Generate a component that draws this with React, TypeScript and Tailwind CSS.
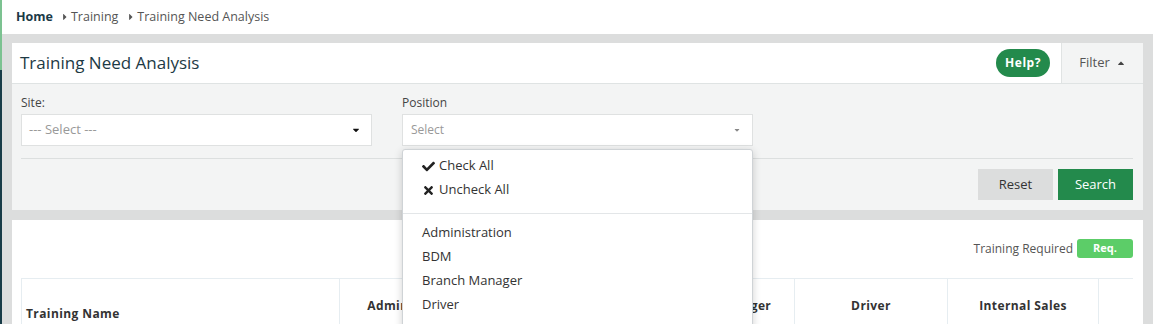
import React from 'react';
import { FaCaretRight, FaCaretUp, FaCaretDown, FaCheck, FaTimes } from 'react-icons/fa';

const positions = ['Administration', 'BDM', 'Branch Manager', 'Driver'];

const columns = [
  { name: 'Administration', w: 'w-[152px]' },
  { name: 'BDM', w: 'w-[152px]' },
  { name: 'Branch Manager', w: 'w-[151px]' },
  { name: 'Driver', w: 'w-[153px]' },
  { name: 'Internal Sales', w: 'w-[151px]' },
];

function PositionDropdown() {
  return (
    <div className="absolute left-0 top-[calc(100%+3px)] w-[351px] h-[200px] bg-white border border-[#cfd3d6] rounded-[3px] shadow-[0_2px_8px_rgba(0,0,0,0.18)] z-10 pt-[4px] text-[13px] text-[#333]">
      <div className="h-[24px] flex items-center pl-[19px] gap-[4px]">
        <FaCheck className="text-[13px] text-[#222]" />
        <span>Check All</span>
      </div>
      <div className="h-[24px] flex items-center pl-[19px] gap-[4px]">
        <FaTimes className="text-[13px] text-[#222]" />
        <span>Uncheck All</span>
      </div>
      <div className="h-px bg-[#e3e6e8] mt-[11px] mb-[7px]" />
      {positions.map((p) => (
        <div key={p} className="h-[24px] flex items-center pl-[19px]">
          {p}
        </div>
      ))}
    </div>
  );
}

export default function App() {
  return (
    <div className="w-[1153px] h-[324px] overflow-hidden flex font-['Open_Sans',sans-serif]">
      <div className="w-[2px] flex flex-col shrink-0">
        <div className="h-[70px] shrink-0 bg-[#7cc291]" />
        <div className="flex-1 bg-[#173b47]" />
      </div>

      <div className="flex-1 bg-[#dcdddd] flex flex-col">
        <div className="h-[34px] shrink-0 bg-white flex items-center pl-[14px] text-[12.5px] text-[#555]">
          <span className="font-bold text-[#1b3a47]">Home</span>
          <FaCaretRight className="ml-[7px] mr-[1px] text-[10px] text-[#555]" />
          <span>Training</span>
          <FaCaretRight className="ml-[8px] mr-[1px] text-[10px] text-[#555]" />
          <span>Training Need Analysis</span>
        </div>

        <div className="shrink-0 pt-[9px] pl-[10px] pr-[10px] flex flex-col gap-[10px]">
          <div className="shrink-0 bg-white">
            <div className="h-[41px] border-b border-[#dfe3e3] flex items-stretch">
              <div className="flex-1 flex items-center pl-[8px] text-[17px] text-[#1d3a45]">
                Training Need Analysis
              </div>
              <div className="flex items-center pr-[11px]">
                <button className="h-[28px] w-[54px] rounded-full bg-[#238a4c] text-white text-[12px] font-bold tracking-[0.5px]">
                  Help?
                </button>
              </div>
              <div className="w-[82px] bg-[#f3f4f4] border-l border-[#e0e3e3] flex items-center justify-center gap-[6px] text-[13px] text-[#555]">
                <span>Filter</span>
                <FaCaretUp className="text-[10px] text-[#444]" />
              </div>
            </div>

            <div className="bg-[#f3f4f4] pl-[9px] pr-[10px] pt-[11px] pb-[10px]">
              <div className="flex gap-[30px]">
                <div className="w-[351px]">
                  <div className="text-[12px] text-[#444] leading-[16px] mb-[3px]">Site:</div>
                  <div className="h-[32px] bg-white border border-[#dfe1e1] flex items-center justify-between pl-[7px] pr-[10px] text-[13px] text-[#999]">
                    <span>--- Select ---</span>
                    <FaCaretDown className="text-[10px] text-[#111]" />
                  </div>
                </div>
                <div className="w-[351px] relative">
                  <div className="text-[12px] text-[#444] leading-[16px] mb-[3px]">Position</div>
                  <div className="h-[32px] bg-white border border-[#dfe1e1] flex items-center justify-between pl-[8px] pr-[11px] text-[12px] text-[#999]">
                    <span>Select</span>
                    <FaCaretDown className="text-[8px] text-[#888]" />
                  </div>
                  <PositionDropdown />
                </div>
              </div>
              <div className="h-px bg-[#dcdfdf] mt-[12px] mb-[10px]" />
              <div className="flex justify-end gap-[5px]">
                <button className="h-[31px] w-[75px] bg-[#dcdddd] text-[13px] text-[#333]">Reset</button>
                <button className="h-[31px] w-[75px] bg-[#238a4c] text-[13px] text-white">Search</button>
              </div>
            </div>
          </div>

          <div className="shrink-0 bg-white pl-[9px] pr-[10px] pt-[19px] h-[120px]">
            <div className="flex justify-end items-center gap-[4px] h-[19px]">
              <span className="text-[12px] text-[#555]">Training Required</span>
              <span className="w-[56px] h-[19px] rounded-[3px] bg-[#5ccd68] text-white text-[11px] font-bold flex items-center justify-center">
                Req.
              </span>
            </div>
            <table className="mt-[20px] w-full border-collapse border-t border-[#e6edf1] text-[12px] font-bold text-[#333] tracking-[0.4px]">
              <thead>
                <tr className="h-[54px]">
                  <th className="w-[318px] border-l border-r border-[#e6edf1] text-left align-bottom pl-[4px] pb-[10px] font-bold">
                    Training Name
                  </th>
                  {columns.map((c) => (
                    <th key={c.name} className={`${c.w} border-r border-[#e6edf1] text-center align-middle font-bold`}>
                      {c.name}
                    </th>
                  ))}
                  <th className="border-[#e6edf1]" />
                </tr>
              </thead>
            </table>
          </div>
        </div>
      </div>
    </div>
  );
}
